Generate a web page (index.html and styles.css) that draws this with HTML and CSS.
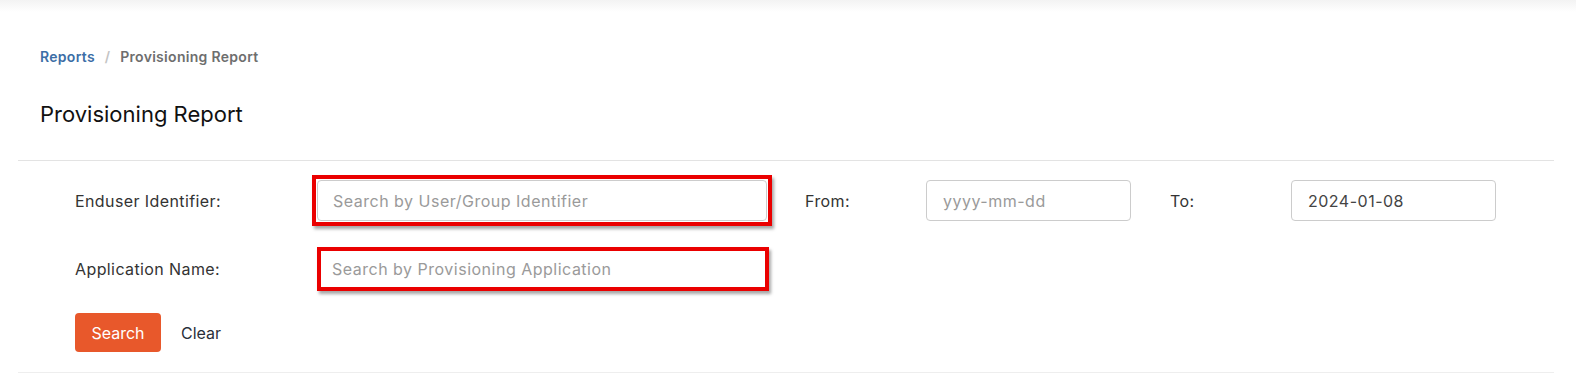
FILE: index.html
```html
<!DOCTYPE html>
<html lang="en">
<head>
  <meta charset="UTF-8">
  <title>Provisioning Report</title>
  <link rel="stylesheet" href="styles.css">
</head>
<body>
  <div class="topbar"></div>

  <div class="page">
    <nav class="breadcrumb">
      <a href="#">Reports</a>
      <span class="sep">/</span>
      <span class="current">Provisioning Report</span>
    </nav>

    <h1 class="page-title">Provisioning Report</h1>

    <!-- FILTER FORM -->
    <form class="filters" onsubmit="return false">
      <div class="row">
        <label class="lbl">Enduser Identifier:</label>
        <div class="mark mark-1">
          <input type="text" class="field wide" placeholder="Search by User/Group Identifier">
        </div>
        <label class="lbl lbl-from">From:</label>
        <input type="text" class="field date" placeholder="yyyy-mm-dd">
        <label class="lbl lbl-to">To:</label>
        <input type="text" class="field date" value="2024-01-08">
      </div>

      <div class="row row-2">
        <label class="lbl">Application Name:</label>
        <div class="mark mark-2">
          <input type="text" class="field wide" placeholder="Search by Provisioning Application">
        </div>
      </div>

      <div class="actions">
        <button class="btn-search">Search</button>
        <button type="reset" class="btn-clear">Clear</button>
      </div>
    </form>
  </div>
</body>
</html>
```

FILE: styles.css
```css
* { margin: 0; padding: 0; box-sizing: border-box; }
body { font-family: 'Inter', 'Noto Sans', sans-serif; background: #fff; color: #333; width: 1576px; height: 380px; overflow: hidden; }

/* TOP SHADOW STRIP */
.topbar { height: 12px; background: linear-gradient(#f3f3f3, #fff); }

/* PAGE */
.page { margin: 0 22px 0 18px; }

.breadcrumb { padding: 37px 0 0 22px; font-size: 14px; font-weight: 600; line-height: 16px; letter-spacing: 0.3px; }
.breadcrumb a { color: #3c6ea6; text-decoration: none; }
.breadcrumb .sep { color: #c4c4c4; margin: 0 6px; }
.breadcrumb .current { color: #6e6e6e; }

.page-title {
  padding: 36px 0 0 22px; font-size: 22px; font-weight: 400; color: #111;
  line-height: 26px; height: 96px; border-bottom: 1px solid #e3e3e3;
}

/* FILTERS */
.filters { padding: 19px 0 0 57px; border-bottom: 1px solid #eee; height: 212px; }
.row { display: flex; align-items: center; height: 41px; }
.row-2 { margin-top: 27px; }
.lbl { font-size: 16px; color: #333; width: 237px; letter-spacing: 0.4px; }
.lbl-from { width: 121px; margin-left: 33px; }
.lbl-to { width: 121px; margin-left: 39px; }

.field {
  height: 41px; border: 1px solid #ccc; border-radius: 4px; padding: 0 16px;
  font-family: inherit; font-size: 16px; color: #444; outline: none; letter-spacing: 0.5px;
}
.field::placeholder { color: #9a9a9a; }
.field.wide { width: 450px; padding-left: 15px; }
.field.date { width: 205px; }

/* RED ANNOTATION BOXES */
.mark { border: 4px solid #ea0000; padding: 1px; box-shadow: 2px 3px 3px rgba(0,0,0,0.35); margin: -5px 0; }
.mark-2 { padding: 0; margin: 0 0 0 5px; }
.mark-2 .field { border: none; height: 36px; width: 444px; padding-left: 11px; }

.actions { display: flex; align-items: center; margin-top: 24px; }
.btn-search {
  background: #e8582b; color: #fff; border: none; border-radius: 4px;
  width: 86px; height: 39px; font-family: inherit; font-size: 16px; cursor: pointer;
}
.btn-clear { background: none; border: none; margin-left: 20px; font-family: inherit; font-size: 16px; color: #2a2f3a; cursor: pointer; }
```
